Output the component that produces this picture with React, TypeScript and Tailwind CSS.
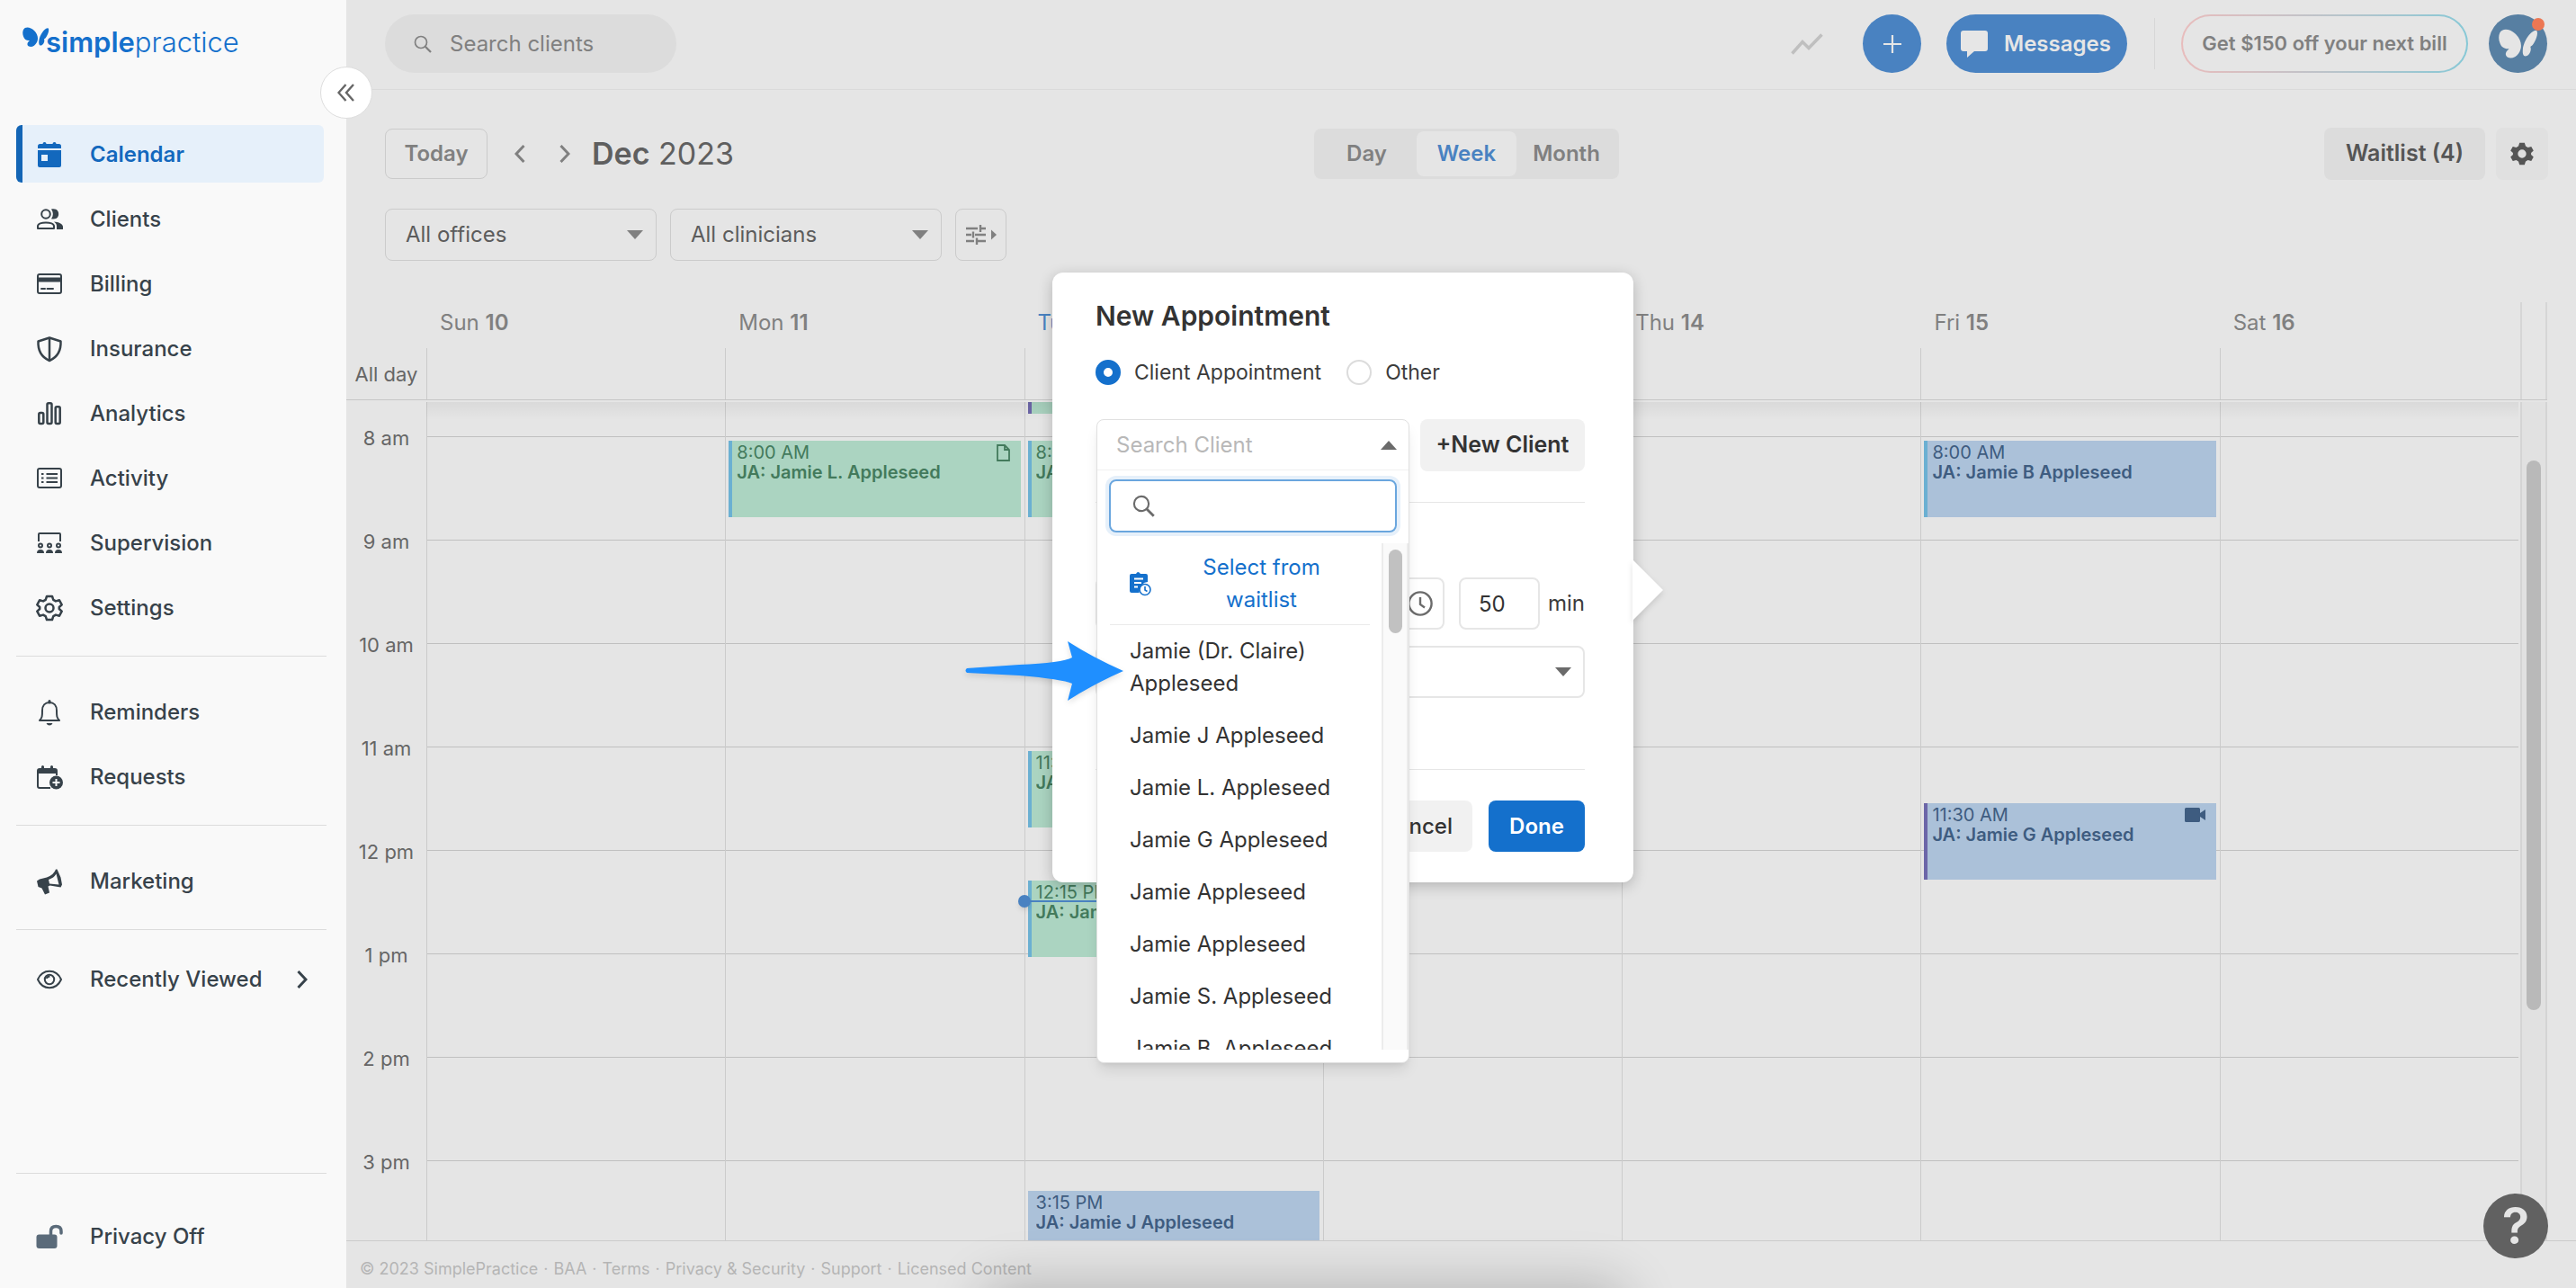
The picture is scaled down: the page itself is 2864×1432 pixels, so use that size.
import { useState, type ReactNode } from "react";
import clsx from "clsx";

/* ---------- Icons (30 x 30 box unless noted) ---------- */

function Icon({ children, className }: { children: ReactNode; className?: string }) {
  return (
    <svg viewBox="0 0 30 30" fill="none" stroke="currentColor" strokeWidth={2} strokeLinejoin="round" aria-hidden="true" className={clsx("size-[30px] shrink-0", className)}>
      {children}
    </svg>
  );
}

const CalendarIcon = () => (
  <Icon>
    <path d="M2 8V5.500Q2 3 4.500 3H25.500Q28 3 28 5.500V8Z" fill="currentColor" stroke="none" />
    <path fillRule="evenodd" d="M2 10H28V27Q28 29 26 29H4Q2 29 2 27ZM6 15V22H13V15Z" fill="currentColor" stroke="none" />
    <path d="M9.500 3V5M20.500 3V5" strokeWidth={4} strokeLinecap="round" />
  </Icon>
);
const ClientsIcon = () => (
  <Icon>
    <circle cx="11" cy="9" r="4.800" />
    <path d="M2 25V22.500C2 17 20 17 20 22.500V25Z" />
    <path d="M17 3.500C23 2 26 6 25 10.500C24 14.500 20 15 17 14.300C19.500 11 19.500 7 17 3.500Z" fill="currentColor" stroke="none" />
    <path d="M20 17.500C25 17.800 30 20 30 23V26H23V22.500C23 20.500 22 19 20 17.500Z" fill="currentColor" stroke="none" />
  </Icon>
);
const BillingIcon = () => (
  <Icon>
    <rect x="2" y="4" width="26" height="21" rx="2" />
    <path d="M2 10H28" strokeWidth={5} />
    <path d="M6 20H10M12.500 20H19" strokeLinecap="round" />
  </Icon>
);
const InsuranceIcon = () => (
  <Icon className="stroke-[2.500]">
    <path d="M15 2.500L27.500 6.500C28 17 24 24 15 28C6 24 2 17 2.500 6.500Z" />
    <path d="M15 3V27" />
  </Icon>
);
const AnalyticsIcon = () => (
  <Icon className="stroke-[2.500]">
    <rect x="3.300" y="14" width="5" height="12" rx="1.500" />
    <rect x="12.500" y="3.300" width="5" height="22.700" rx="1.500" />
    <rect x="21.700" y="7.300" width="5" height="18.700" rx="1.500" />
  </Icon>
);
const ActivityIcon = () => (
  <Icon>
    <rect x="2" y="4" width="26" height="21" rx="2" />
    <path d="M6 10H8.500M6 14.500H8.500M6 19H8.500M11.500 10H24M11.500 14.500H24M11.500 19H24" />
  </Icon>
);
const SupervisionIcon = () => (
  <Icon>
    <path d="M3 13V5Q3 4 4 4H26Q27 4 27 5V13" />
    {[5, 15, 25].map((x) => (
      <g key={x}>
        <circle cx={x} cy="17.500" r="2" />
        <path d={`M${x - 4} 26Q${x - 4} 22 ${x} 22Q${x + 4} 22 ${x + 4} 26Z`} fill="currentColor" stroke="none" />
      </g>
    ))}
  </Icon>
);
const GEAR =
  "M12 2H18L19.300 5.800L22 7.400L26 6.300L28.700 11.300L25.800 14V16L28.700 18.700L26 23.700L22 22.600L19.300 24.200L18 28H12L10.700 24.200L8 22.600L4 23.700L1.300 18.700L4.200 16V14L1.300 11.300L4 6.300L8 7.400L10.700 5.800Z";
const SettingsIcon = () => (
  <Icon className="stroke-[2.500]">
    <path d={GEAR} />
    <circle cx="15" cy="15" r="4.500" />
  </Icon>
);
const BellIcon = () => (
  <Icon>
    <path d="M4 24C7 21 7 19 7 13C7 7.500 10 4 15 4C20 4 23 7.500 23 13C23 19 23 21 26 24Z" />
    <path d="M15 2.500V4" strokeWidth={3} strokeLinecap="round" />
    <path d="M11.500 27H18.500Q17.500 29.500 15 29.500Q12.500 29.500 11.500 27Z" fill="currentColor" stroke="none" />
  </Icon>
);
const RequestsIcon = () => (
  <Icon>
    <path d="M16 27H4Q2 27 2 25V8Q2 6 4 6H21Q23 6 23 8V13" />
    <path d="M2 8.500H23" strokeWidth={5} />
    <path d="M7.500 3.500V6M17.500 3.500V6" strokeWidth={3} strokeLinecap="round" />
    <circle cx="22.500" cy="21" r="7.500" fill="currentColor" stroke="none" />
    <path d="M22.500 17V25M18.500 21H26.500" stroke="#f9f9f9" />
  </Icon>
);
const MarketingIcon = () => (
  <Icon>
    <path fillRule="evenodd" d="M23.500 1.500L27.500 10.500L29 18.500L27.500 21.500L15.500 19.500L13.500 20.500L15 27.500L10 29.500L6.500 22.500L2.500 21L1 14.500L4 12.500L12 10.500Q20 7.500 22 1.500ZM14 13L15 17.500L25.500 18.500L22.500 6.500Q20 11 14 13Z" fill="currentColor" stroke="none" />
  </Icon>
);
const EyeIcon = () => (
  <Icon>
    <path d="M2 15C7.500 2.800 22.500 2.800 28 15C22.500 27.200 7.500 27.200 2 15Z" />
    <circle cx="15" cy="15" r="5.200" />
    <path d="M12 14C12 11.500 14 11.500 15.500 11.500" />
  </Icon>
);
const UnlockIcon = () => (
  <Icon className="text-[#5b6b7a]">
    <rect x="0.500" y="12.500" width="23" height="15.500" rx="3" fill="currentColor" stroke="none" />
    <path d="M16.500 13V9Q16.500 3.500 22.300 3.500Q28 3.500 28 9V11" strokeWidth={3.500} strokeLinecap="round" />
  </Icon>
);

function SearchIcon({ className }: { className?: string }) {
  return (
    <svg viewBox="0 0 20 20" fill="none" stroke="currentColor" strokeWidth={1.7} aria-hidden="true" className={className}>
      <circle cx="8" cy="8" r="6.500" />
      <path d="M12.800 12.800L19 19" strokeWidth={2.300} />
    </svg>
  );
}

function Caret({ className, up }: { className?: string; up?: boolean }) {
  return (
    <svg viewBox="0 0 18 10" fill="currentColor" aria-hidden="true" className={clsx("h-[10px] w-[18px]", className)}>
      <path d={up ? "M0 10L9 0L18 10Z" : "M0 0L9 10L18 0Z"} />
    </svg>
  );
}

function Butterfly({ className }: { className?: string }) {
  return (
    <svg viewBox="0 0 30 23" fill="currentColor" aria-hidden="true" className={className}>
      <path d="M1 3C3 -1 9 0 13 4C17 8 18 13 16 17C14 21 10 23 7 21.500C5 20.500 5 18 6.500 16.500C7 16 7.500 15.500 8 15C5 15.500 2 14 1 10.500C0 8 0 5 1 3Z" />
      <path d="M28.500 1.200C30 2.500 29 7 26.500 11C25.500 12.500 24.800 13 24 13.500C25 16 23.500 19.500 21 20.500C18.500 21 18 18.500 18.300 15.500C19 9 24.500 1 28.500 1.200Z" />
    </svg>
  );
}

/* ---------- Sidebar ---------- */

type NavEntry = { label: string; icon: () => ReactNode; active?: boolean };

const MAIN_NAV: NavEntry[] = [
  { label: "Calendar", icon: CalendarIcon, active: true },
  { label: "Clients", icon: ClientsIcon },
  { label: "Billing", icon: BillingIcon },
  { label: "Insurance", icon: InsuranceIcon },
  { label: "Analytics", icon: AnalyticsIcon },
  { label: "Activity", icon: ActivityIcon },
  { label: "Supervision", icon: SupervisionIcon },
  { label: "Settings", icon: SettingsIcon },
];

function NavLink({ entry, children }: { entry: NavEntry; children?: ReactNode }) {
  const Glyph = entry.icon;
  return (
    <a
      href="#"
      aria-current={entry.active ? "page" : undefined}
      className={clsx(
        "mr-[3px] flex h-16 items-center gap-[30px] rounded-md border-l-[7px] pt-px pl-[15px] text-2xl",
        entry.active ? "border-[#1365b5] bg-[#e6f0fa] font-semibold text-[#1368bd]" : "border-transparent font-medium text-[#37424a]",
      )}
    >
      <Glyph />
      <span>{entry.label}</span>
      {children}
    </a>
  );
}

function Sidebar() {
  return (
    <aside className="relative z-10 flex w-[385px] shrink-0 flex-col bg-[#f9f9f9] pt-[26px] pr-[22px] pb-[26px] pl-[18px]">
      <a href="#" aria-label="simplepractice" className="flex h-11 items-start pl-[7px] text-[#1470cc]">
        <Butterfly className="mt-1 h-[23px] w-[30px]" />
        <span className="-ml-1 pt-px text-[31px] leading-10 font-semibold">
          simple<span className="font-light">practice</span>
        </span>
      </a>
      <button type="button" aria-label="Collapse menu" className="absolute top-[74px] -right-[29px] flex size-[58px] items-center justify-center rounded-full border border-[#dedede] bg-white text-[#666]">
        <svg viewBox="0 0 20 20" fill="none" stroke="currentColor" strokeWidth={2.4} className="size-5" aria-hidden="true">
          <path d="M9.500 1L1.500 10L9.500 19M18 1L10 10L18 19" />
        </svg>
      </button>
      <nav className="mt-[69px] flex flex-1 flex-col">
        <div className="flex flex-col gap-2">
          {MAIN_NAV.map((entry) => (
            <NavLink key={entry.label} entry={entry} />
          ))}
        </div>
        <hr className="mt-[22px] mb-[29px] border-[#dcdcdc]" />
        <div className="flex flex-col gap-2">
          <NavLink entry={{ label: "Reminders", icon: BellIcon }} />
          <NavLink entry={{ label: "Requests", icon: RequestsIcon }} />
        </div>
        <hr className="mt-[22px] mb-[29px] border-[#dcdcdc]" />
        <NavLink entry={{ label: "Marketing", icon: MarketingIcon }} />
        <hr className="my-[22px] border-[#dcdcdc]" />
        <NavLink entry={{ label: "Recently Viewed", icon: EyeIcon }}>
          <svg viewBox="0 0 12 20" fill="none" stroke="currentColor" strokeWidth={3} className="mr-[18px] ml-auto h-5 w-3" aria-hidden="true">
            <path d="M1.500 1L10 10L1.500 19" />
          </svg>
        </NavLink>
        <hr className="mt-auto mb-[37px] border-[#dcdcdc]" />
        <NavLink entry={{ label: "Privacy Off", icon: UnlockIcon }} />
      </nav>
    </aside>
  );
}

/* ---------- Top bar and toolbar ---------- */

function TopBar() {
  return (
    <header className="flex h-[100px] shrink-0 items-start border-b border-[#dadada] pt-4 pr-8 pl-[43px]">
      <label className="flex h-[65px] w-[324px] items-center gap-5 rounded-full bg-[#dcdcdc] px-8 text-[#808080]">
        <SearchIcon className="size-5 shrink-0" />
        <input type="search" aria-label="Search clients" placeholder="Search clients" className="w-full bg-transparent text-2xl outline-none placeholder:text-[#808080]" />
      </label>
      <div className="ml-auto flex h-[65px] items-center">
        <button type="button" aria-label="Activity trends" className="mr-11 text-[#bfbfbf]">
          <svg viewBox="0 0 36 24" fill="none" stroke="currentColor" strokeWidth={3.5} className="h-6 w-9" aria-hidden="true">
            <path d="M1.500 22.500L13 9.500L20 16.500L34.500 1.500" />
          </svg>
        </button>
        <button type="button" aria-label="Create" className="mr-7 flex size-[65px] items-center justify-center rounded-full bg-[#4982c1] text-[#e6e6e6]">
          <svg viewBox="0 0 20 20" stroke="currentColor" strokeWidth={2.2} className="size-5" aria-hidden="true">
            <path d="M10 0V20M0 10H20" />
          </svg>
        </button>
        <button type="button" className="flex h-[65px] w-[201px] items-center gap-[18px] rounded-full bg-[#4982c1] pl-4 text-2xl font-semibold text-[#e6e6e6]">
          <svg viewBox="0 0 30 30" fill="currentColor" className="size-[30px] shrink-0" aria-hidden="true">
            <path d="M3 0H27Q30 0 30 3V20Q30 23 27 23H15L7 30V23H3Q0 23 0 20V3Q0 0 3 0Z" />
          </svg>
          Messages
        </button>
        <span className="mr-[29px] ml-[30px] h-[57px] w-px bg-[#d6d6d6]" />
        <span className="mr-[23px] rounded-full bg-linear-to-r from-[#e8bcbc] to-[#86c8d6] p-[2px]">
          <button type="button" className="flex h-[61px] w-[315px] items-center justify-center rounded-full bg-[#e5e5e5] text-[22px] font-semibold text-[#808080]">
            Get $150 off your next bill
          </button>
        </span>
        <button type="button" aria-label="Account" className="relative flex size-[65px] items-center justify-center rounded-full bg-[#577fa2] text-[#e5e5e5]">
          <Butterfly className="h-[34px] w-[46px]" />
          <span className="absolute top-1 right-[3px] size-[14px] rounded-full bg-[#ec7753]" />
        </button>
      </div>
    </header>
  );
}

function FilterSelect({ label }: { label: string }) {
  return (
    <div className="relative w-[302px]">
      <select aria-label={label} className="h-[58px] w-full appearance-none rounded-lg border border-[#cbcbcb] bg-transparent pl-[22px] text-2xl text-[#5c5c5c]">
        <option>{label}</option>
      </select>
      <Caret className="pointer-events-none absolute top-6 right-[15px] text-[#808080]" />
    </div>
  );
}

function Chevron({ flip }: { flip?: boolean }) {
  return (
    <svg viewBox="0 0 12 20" fill="none" stroke="currentColor" strokeWidth={3} className="h-5 w-3" aria-hidden="true">
      <path d={flip ? "M1.500 1L10 10L1.500 19" : "M10.500 1L2 10L10.500 19"} />
    </svg>
  );
}

function Toolbar() {
  const [view, setView] = useState("Week");
  return (
    <>
      <div className="mt-[42px] grid h-[58px] shrink-0 grid-cols-[1fr_auto_1fr] items-center pr-[31px] pl-[43px]">
        <div className="flex items-center text-[#808080]">
          <button type="button" className="h-14 w-[114px] rounded-lg border border-[#cbcbcb] text-2xl font-semibold">Today</button>
          <button type="button" aria-label="Previous week" className="mr-[38px] ml-[30px]"><Chevron /></button>
          <button type="button" aria-label="Next week"><Chevron flip /></button>
          <h1 className="ml-6 text-[34px] leading-10 text-[#5f5f5f]">
            <span className="font-semibold">Dec</span> 2023
          </h1>
        </div>
        <div className="flex h-14 w-[339px] items-center rounded-lg bg-[#dcdcdc] px-[3px] text-2xl font-semibold">
          {["Day", "Week", "Month"].map((v) => (
            <button
              key={v}
              type="button"
              aria-pressed={view === v}
              onClick={() => setView(v)}
              className={clsx("h-[50px] flex-1 rounded-lg", view === v ? "bg-[#e5e5e5] text-[#4982c1]" : "text-[#808080]")}
            >
              {v}
            </button>
          ))}
        </div>
        <div className="flex items-center justify-end gap-3 text-[#555]">
          <button type="button" className="h-[58px] w-[179px] rounded-lg bg-[#dcdcdc] text-[25px] font-semibold">Waitlist (4)</button>
          <button type="button" aria-label="Calendar settings" className="flex size-[58px] items-center justify-center rounded-lg bg-[#e0e0e0]">
            <svg viewBox="0 0 30 30" fill="currentColor" fillRule="evenodd" className="size-7" aria-hidden="true">
              <path d={`${GEAR}M15 10A5 5 0 1 0 15 20A5 5 0 1 0 15 10Z`} />
            </svg>
          </button>
        </div>
      </div>
      <div className="mt-8 flex shrink-0 gap-[15px] pl-[43px]">
        <FilterSelect label="All offices" />
        <FilterSelect label="All clinicians" />
        <button type="button" aria-label="More filters" className="flex h-[58px] w-[57px] items-center justify-center rounded-lg border border-[#cbcbcb] text-[#808080]">
          <svg viewBox="0 0 34 22" fill="none" stroke="currentColor" strokeWidth={2.4} className="h-[22px] w-[34px]" aria-hidden="true">
            <path d="M0 4H13M16 0V8M16 4H22M0 11H6M8 7.500V14.500M10 11H22M0 18H9M12 14.500V22M12 18H22" />
            <path d="M28 5.500L34 11L28 16.500Z" fill="currentColor" stroke="none" />
          </svg>
        </button>
      </div>
    </>
  );
}

/* ---------- Week grid ---------- */

const HOUR_PX = 115;
const FIRST_HOUR = 8;

type Appt = { hour: number; time: string; name: string; tone: "green" | "blue"; edge: "sky" | "violet" | "none"; icon?: "note" | "video" };

const DAYS: Array<{ name: string; date: number; today?: boolean; appts: Appt[] }> = [
  { name: "Sun", date: 10, appts: [] },
  { name: "Mon", date: 11, appts: [{ hour: 8, time: "8:00 AM", name: "JA: Jamie L. Appleseed", tone: "green", edge: "sky", icon: "note" }] },
  {
    name: "Tue",
    date: 12,
    today: true,
    appts: [
      { hour: 7, time: "7:00 AM", name: "JA: Jamie Appleseed", tone: "green", edge: "violet" },
      { hour: 8, time: "8:00 AM", name: "JA: Jamie Appleseed", tone: "green", edge: "sky" },
      { hour: 11, time: "11:00 AM", name: "JA: Jamie Appleseed", tone: "green", edge: "sky" },
      { hour: 12.25, time: "12:15 PM", name: "JA: Jamie Appleseed", tone: "green", edge: "sky" },
      { hour: 15.25, time: "3:15 PM", name: "JA: Jamie J Appleseed", tone: "blue", edge: "none" },
    ],
  },
  { name: "Wed", date: 13, appts: [] },
  { name: "Thu", date: 14, appts: [] },
  {
    name: "Fri",
    date: 15,
    appts: [
      { hour: 8, time: "8:00 AM", name: "JA: Jamie B Appleseed", tone: "blue", edge: "sky" },
      { hour: 11.5, time: "11:30 AM", name: "JA: Jamie G Appleseed", tone: "blue", edge: "violet", icon: "video" },
    ],
  },
  { name: "Sat", date: 16, appts: [] },
];

const HOURS = ["8 am", "9 am", "10 am", "11 am", "12 pm", "1 pm", "2 pm", "3 pm"];

const hourTop = (hour: number) => (hour - FIRST_HOUR) * HOUR_PX + 38;

function Appointment({ appt }: { appt: Appt }) {
  return (
    <button
      type="button"
      style={{ top: Math.round(hourTop(appt.hour) + 5) }}
      className={clsx(
        "absolute right-1 left-[3px] h-[85px] border-l-4 pt-[2px] pl-[5px] text-left text-xl leading-[22px]",
        appt.tone === "green" ? "bg-[#abd4c1] text-[#437a5c]" : "bg-[#abc1d9] text-[#3e5c80]",
        appt.edge === "sky" && "border-[#6bb0d2]",
        appt.edge === "violet" && "border-[#6c66a8]",
        appt.edge === "none" && "border-[#abc1d9]",
      )}
    >
      <span className="flex h-full flex-col">
        <span className="flex items-center justify-between pr-3">
          {appt.time}
          {appt.icon === "note" && (
            <svg viewBox="0 0 15 19" fill="none" stroke="currentColor" strokeWidth={1.8} className="h-[19px] w-[15px]" aria-hidden="true">
              <path d="M1 1H9L14 6V18H1ZM9 1V6H14" />
            </svg>
          )}
          {appt.icon === "video" && (
            <svg viewBox="0 0 23 16" fill="currentColor" className="h-4 w-[23px]" aria-hidden="true">
              <path d="M1.500 0H15.500Q17 0 17 1.500V6L23 2V14L17 10V14.500Q17 16 15.500 16H1.500Q0 16 0 14.500V1.500Q0 0 1.500 0Z" />
            </svg>
          )}
        </span>
        <span className="truncate font-semibold">{appt.name}</span>
      </span>
    </button>
  );
}

function WeekGrid() {
  return (
    <section aria-label="Week" className="mt-[46px] flex min-h-0 flex-1 flex-col border-b border-[#cbcbcb]">
      <div className="flex shrink-0">
        <div className="flex w-[89px] flex-col justify-end pb-3 text-center text-[22px] leading-8 text-[#666]">All day</div>
        <div className="grid flex-1 grid-cols-7">
          {DAYS.map((d) => (
            <div key={d.name}>
              <div className={clsx("h-[51px] pt-2 pl-[15px] text-2xl leading-[30px]", d.today ? "text-[#4982c1]" : "text-[#808080]")}>
                {d.name} <span className="font-semibold">{d.date}</span>
              </div>
              <div className="h-[57px] border-l border-[#cbcbcb]" />
            </div>
          ))}
        </div>
        <div className="mr-8 ml-[2px] w-[30px] border-x-2 border-[#d6d6d6]" />
      </div>
      <div className="mr-8 mb-[2px] h-px bg-[#c6c6c6]" />
      <div className="flex min-h-0 flex-1">
        <div className="w-[89px] pt-7 text-center text-[22px] leading-6 text-[#666]">
          {HOURS.map((h, i) => (
            <div key={h} className={i < 7 ? "h-[115px]" : "h-6"}>{h}</div>
          ))}
        </div>
        <div className="relative grid flex-1 grid-cols-7">
          {DAYS.map((d) => (
            <div key={d.name} className="relative overflow-hidden border-l border-[#cbcbcb] pt-[38px]">
              {HOURS.map((h, i) => (
                <div key={h} className={clsx("border-t border-[#c0c0c0]", i < 7 && "h-[115px]")} />
              ))}
              {d.appts.map((a) => (
                <Appointment key={a.hour} appt={a} />
              ))}
              {d.today && <div className="absolute inset-x-0 top-[554px] h-[2px] bg-[#4982c1]" />}
            </div>
          ))}
          <div className="pointer-events-none absolute inset-x-0 top-0 h-5 bg-linear-to-b from-black/5 to-transparent" />
          <div className="absolute top-[548px] left-2/7 size-[14px] -translate-x-1/2 rounded-full bg-[#4982c1] shadow-md" />
        </div>
        <div className="mr-8 ml-[2px] w-[30px] border-x-2 border-[#d4d4d4] bg-[#e1e1e1] pt-[65px]">
          <div className="mx-auto h-[611px] w-4 rounded-full bg-[#b9b9b9]" />
        </div>
      </div>
    </section>
  );
}

/* ---------- New appointment popover ---------- */

const CLIENTS = [
  "Jamie (Dr. Claire) Appleseed",
  "Jamie J Appleseed",
  "Jamie L. Appleseed",
  "Jamie G Appleseed",
  "Jamie Appleseed",
  "Jamie Appleseed",
  "Jamie S. Appleseed",
  "Jamie B. Appleseed",
];

function ClientDropdown() {
  return (
    <div className="absolute top-[163px] left-[49px] w-[348px] rounded-lg border border-[#e0e0e0] bg-white pb-[14px] shadow-lg">
      <button type="button" aria-haspopup="listbox" aria-expanded="true" className="flex h-14 w-full items-center justify-between border-b border-[#f0f0f0] pr-[13px] pl-[21px] text-2xl text-[#b8b8b8]">
        Search Client
        <Caret up className="text-[#6b6b6b]" />
      </button>
      <label className="mx-[13px] mt-[10px] flex h-[59px] items-center rounded-lg border-2 border-[#6aa6de] px-6 text-[#6b6b6b] ring-4 ring-[#e6f0fa]">
        <SearchIcon className="size-[25px] shrink-0" />
        <input type="text" aria-label="Search" className="w-full px-3 text-2xl outline-none" />
      </label>
      <div className="mt-3 flex h-[563px] overflow-hidden">
        <div className="min-w-0 flex-1 pr-[13px] pl-[14px]">
          <button type="button" className="flex w-full items-center border-b border-[#ebebeb] pt-[9px] pr-[26px] pb-[9px] pl-[22px] text-2xl leading-9 text-[#1470cc]">
            <svg viewBox="0 0 24 28" fill="none" stroke="currentColor" strokeWidth={2} className="h-7 w-6 shrink-0" aria-hidden="true">
              <path d="M2 3H7Q9 -1 12 3H18Q20 3 20 5V12Q11 13 10.500 24H2Q0 24 0 22V5Q0 3 2 3Z" fill="currentColor" stroke="none" />
              <path d="M5 8.500H15M5 13H13M5 17.500H9" stroke="#fff" />
              <circle cx="17" cy="20.500" r="6" fill="#fff" strokeWidth={1.600} />
              <path d="M17 17V21L19.500 22.500" strokeWidth={1.600} />
            </svg>
            <span className="flex-1 pl-7">Select from waitlist</span>
          </button>
          <ul role="listbox" aria-label="Clients" className="text-2xl leading-9 text-[#333]">
            {CLIENTS.map((name, i) => (
              <li key={i} role="option" aria-selected="false" className="py-[11px] pl-[22px]">{name}</li>
            ))}
          </ul>
        </div>
        <div className="w-[30px] border-x-2 border-[#ececec] bg-[#fafafa] pt-[7px]">
          <div className="mx-auto h-[93px] w-[15px] rounded-full bg-[#c1c1c1]" />
        </div>
      </div>
    </div>
  );
}

function RadioOption({ label, checked, onChange }: { label: string; checked: boolean; onChange: () => void }) {
  return (
    <label className="flex items-center gap-[15px]">
      <input
        type="radio"
        name="kind"
        checked={checked}
        onChange={onChange}
        className="size-7 appearance-none rounded-full border-2 border-[#dcdcdc] checked:border-[9px] checked:border-[#1470cc]"
      />
      {label}
    </label>
  );
}

function NewAppointment() {
  const [kind, setKind] = useState("client");
  return (
    <div role="dialog" aria-label="New Appointment" className="absolute top-[303px] left-[785px] w-[646px] rounded-xl bg-white pt-7 pr-[54px] pb-[34px] pl-12 text-2xl text-[#3c3c3c] shadow-[0_4px_16px_rgba(0,0,0,0.22)]">
      <h2 className="text-3xl leading-10 font-semibold text-[#333]">New Appointment</h2>
      <div className="mt-[27px] flex h-8 items-center gap-7 text-[23px]">
        <RadioOption label="Client Appointment" checked={kind === "client"} onChange={() => setKind("client")} />
        <RadioOption label="Other" checked={kind === "other"} onChange={() => setKind("other")} />
      </div>
      <div className="mt-9 flex justify-end">
        <button type="button" className="h-[58px] w-[183px] rounded-lg bg-[#f1f1f1] text-[25px] font-semibold text-[#333]">+New Client</button>
      </div>
      <hr className="mt-[34px] mb-[83px] border-[#e6e6e6]" />
      <div className="flex items-center">
        <input type="text" aria-label="Date" className="h-[58px] w-[184px] rounded-lg border-2 border-[#e6e6e6]" />
        <div className="relative ml-4 w-[188px]">
          <input type="text" aria-label="Start time" className="h-[58px] w-full rounded-lg border-2 border-[#e6e6e6]" />
          <svg viewBox="0 0 28 28" fill="none" stroke="#6b6b6b" strokeWidth={2.400} className="pointer-events-none absolute top-[15px] right-[13px] size-7" aria-hidden="true">
            <circle cx="14" cy="14" r="12.600" />
            <path d="M14 7V15L19 18.500" />
          </svg>
        </div>
        <input type="text" aria-label="Duration" defaultValue="50" className="ml-4 h-[58px] w-[90px] rounded-lg border-2 border-[#e6e6e6] pl-5 text-[#333]" />
        <span className="ml-auto">min</span>
      </div>
      <div className="relative mt-[18px]">
        <select aria-label="Location" className="h-[58px] w-full appearance-none rounded-lg border-2 border-[#e6e6e6]" />
        <Caret className="pointer-events-none absolute top-6 right-[15px] text-[#6b6b6b]" />
      </div>
      <hr className="mt-[79px] mb-[34px] border-[#e6e6e6]" />
      <div className="flex justify-end gap-[18px]">
        <button type="button" className="h-[57px] rounded-lg bg-[#f1f1f1] px-[22px] font-medium text-[#333]">Cancel</button>
        <button type="button" className="h-[57px] w-[107px] rounded-lg bg-[#1470cc] font-semibold text-white">Done</button>
      </div>
      {/* Pointer towards the selected slot */}
      <svg viewBox="0 0 34 68" className="absolute top-[319px] -right-[33px] h-[68px] w-[34px] drop-shadow-md" aria-hidden="true">
        <path d="M0 0L34 34L0 68Z" fill="#fff" />
      </svg>
      <ClientDropdown />
      <svg viewBox="0 0 176 66" className="absolute top-[410px] -left-[97px] h-[66px] w-[176px] drop-shadow-md" aria-hidden="true">
        <path d="M2 30L60 26Q108 24 119 18L114 0Q142 18 176 33Q142 48 114 66L119 47Q108 42 60 38L2 35Q-1 32.500 2 30Z" fill="#1f8fff" />
      </svg>
    </div>
  );
}

/* ---------- Page ---------- */

const FOOTER_LINKS = ["BAA", "Terms", "Privacy & Security", "Support", "Licensed Content"];

export default function App() {
  return (
    <div className="flex min-h-screen bg-[#e5e5e5] font-[Inter,'Liberation_Sans',sans-serif]">
      <Sidebar />
      <main className="relative flex min-w-0 flex-1 flex-col overflow-hidden">
        <TopBar />
        <Toolbar />
        <WeekGrid />
        <footer className="flex h-[52px] shrink-0 items-center gap-[6px] pt-[10px] pl-[15px] text-lg text-[#b5b5b5]">
          <span>© 2023 SimplePractice</span>
          {FOOTER_LINKS.map((link) => (
            <span key={link} className="flex gap-[6px]">
              <span>·</span>
              <a href="#">{link}</a>
            </span>
          ))}
        </footer>
        <div className="pointer-events-none absolute -bottom-10 left-[735px] h-4 w-[660px] rounded-full shadow-[0_0_60px_30px_rgba(0,0,0,0.2)]" />
        <NewAppointment />
        <button type="button" aria-label="Help" className="absolute right-[31px] bottom-[33px] flex size-[72px] items-center justify-center rounded-full bg-[#616161] text-[56px] font-semibold text-[#e5e5e5]">
          ?
        </button>
      </main>
    </div>
  );
}
